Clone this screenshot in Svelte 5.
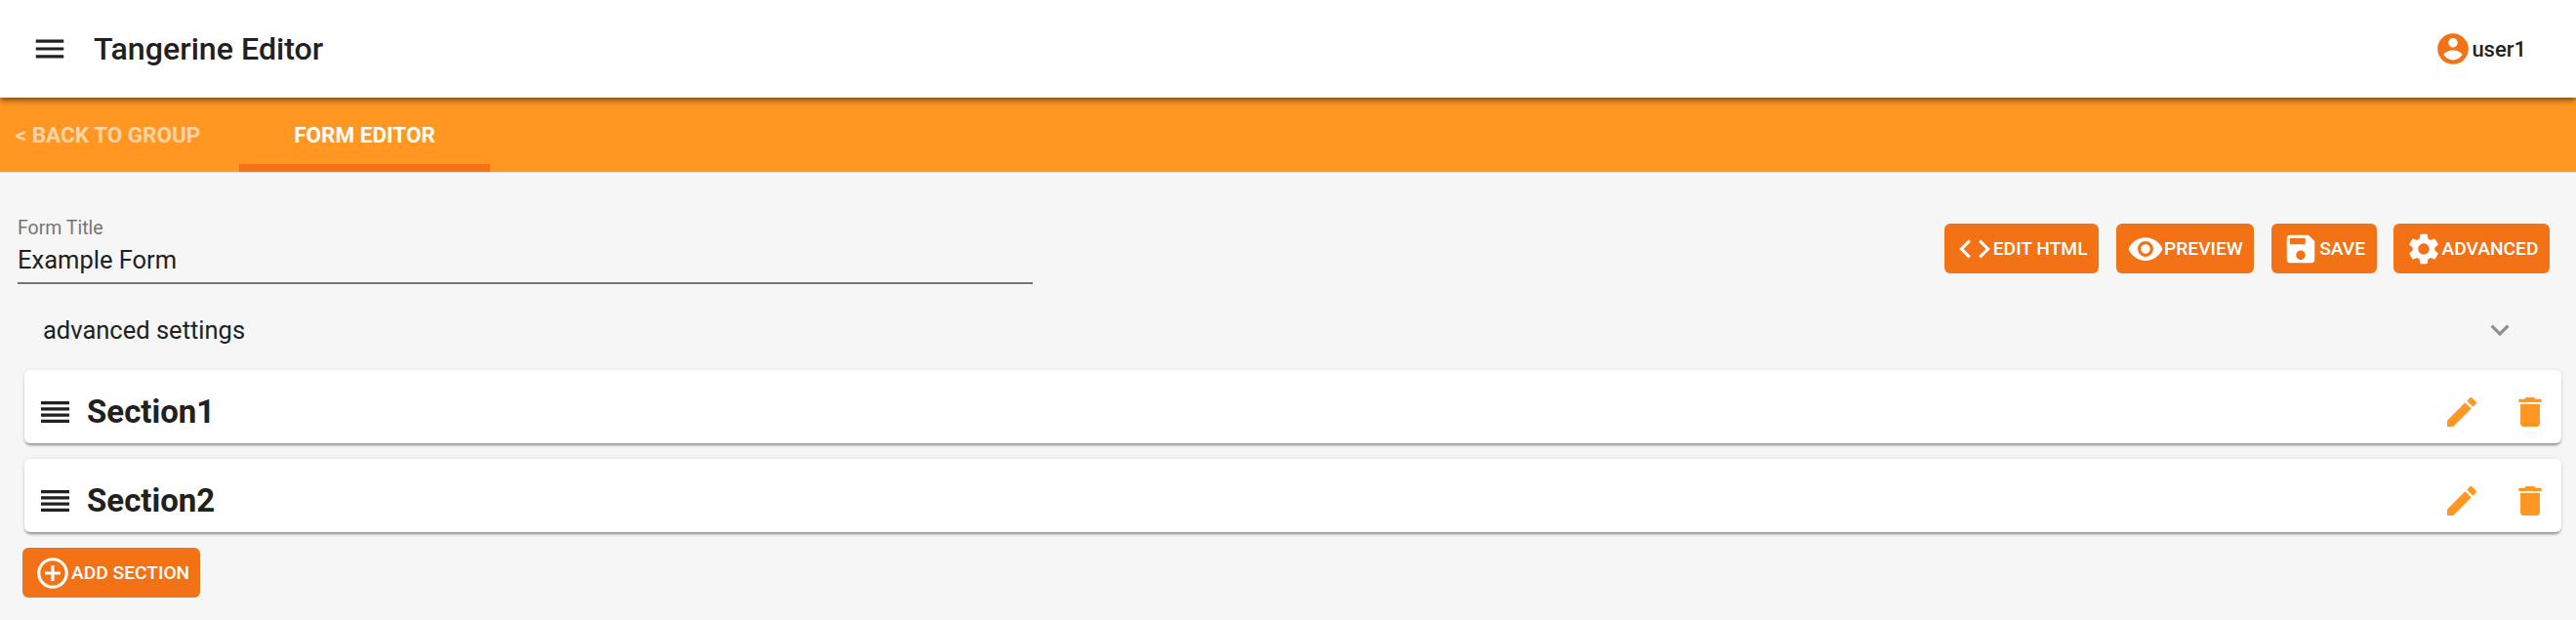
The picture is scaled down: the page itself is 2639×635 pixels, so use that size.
<script lang="ts">
	const paths = {
		menu: 'M3 18h18v-2H3v2zm0-5h18v-2H3v2zm0-7v2h18V6H3z',
		account: 'M12 2C6.48 2 2 6.48 2 12s4.48 10 10 10 10-4.48 10-10S17.52 2 12 2zm0 3c1.66 0 3 1.34 3 3s-1.34 3-3 3-3-1.34-3-3 1.34-3 3-3zm0 14.2c-2.5 0-4.71-1.28-6-3.22.03-1.99 4-3.08 6-3.08 1.99 0 5.97 1.09 6 3.08-1.29 1.94-3.5 3.22-6 3.22z',
		code: 'M9.4 16.6L4.8 12l4.6-4.6L8 6l-6 6 6 6 1.4-1.4zm5.2 0l4.6-4.6-4.6-4.6L16 6l6 6-6 6-1.4-1.4z',
		eye: 'M12 4.5C7 4.5 2.73 7.61 1 12c1.73 4.39 6 7.5 11 7.5s9.27-3.11 11-7.5c-1.73-4.39-6-7.5-11-7.5zM12 17c-2.76 0-5-2.24-5-5s2.24-5 5-5 5 2.24 5 5-2.24 5-5 5zm0-8c-1.66 0-3 1.34-3 3s1.34 3 3 3 3-1.34 3-3-1.34-3-3-3z',
		save: 'M17 3H5c-1.11 0-2 .9-2 2v14c0 1.1.89 2 2 2h14c1.1 0 2-.9 2-2V7l-4-4zm-5 16c-1.66 0-3-1.34-3-3s1.34-3 3-3 3 1.34 3 3-1.34 3-3 3zm3-10H5V5h10v4z',
		gear: 'M19.14 12.94c.04-.3.06-.61.06-.94 0-.32-.02-.64-.07-.94l2.03-1.58c.18-.14.23-.41.12-.61l-1.92-3.32c-.12-.22-.37-.29-.59-.22l-2.39.96c-.5-.38-1.03-.7-1.62-.94l-.36-2.54c-.04-.24-.24-.41-.48-.41h-3.84c-.24 0-.43.17-.47.41l-.36 2.54c-.59.24-1.13.57-1.62.94l-2.39-.96c-.22-.08-.47 0-.59.22L2.74 8.87c-.12.21-.08.47.12.61l2.03 1.58c-.05.3-.09.63-.09.94s.02.64.07.94l-2.03 1.58c-.18.14-.23.41-.12.61l1.92 3.32c.12.22.37.29.59.22l2.39-.96c.5.38 1.03.7 1.62.94l.36 2.54c.05.24.24.41.48.41h3.84c.24 0 .44-.17.47-.41l.36-2.54c.59-.24 1.13-.56 1.62-.94l2.39.96c.22.08.47 0 .59-.22l1.92-3.32c.12-.22.07-.47-.12-.61l-2.01-1.58zM12 15.6c-1.98 0-3.6-1.62-3.6-3.6s1.62-3.6 3.6-3.6 3.6 1.62 3.6 3.6-1.62 3.6-3.6 3.6z',
		add: 'M13 7h-2v4H7v2h4v4h2v-4h4v-2h-4V7zm-1-5C6.48 2 2 6.48 2 12s4.48 10 10 10 10-4.48 10-10S17.52 2 12 2zm0 18c-4.41 0-8-3.59-8-8s3.59-8 8-8 8 3.59 8 8-3.59 8-8 8z',
		edit: 'M3 17.25V21h3.75L17.81 9.94l-3.75-3.75L3 17.25zM20.71 7.04c.39-.39.39-1.02 0-1.41l-2.34-2.34c-.39-.39-1.02-.39-1.41 0l-1.83 1.83 3.75 3.75 1.83-1.83z',
		trash: 'M6 19c0 1.1.9 2 2 2h8c1.1 0 2-.9 2-2V7H6v12zM19 4h-3.5l-1-1h-5l-1 1H5v2h14V4z',
		handle: 'M4 15h16v-2H4v2zm0 4h16v-2H4v2zm0-8h16V9H4v2zm0-6v2h16V5H4z',
		chevron: 'M7.41 8.59L12 13.17l4.59-4.58L18 10l-6 6-6-6 1.41-1.41z'
	};

	const actions = [
		{ label: 'EDIT HTML', icon: paths.code },
		{ label: 'PREVIEW', icon: paths.eye },
		{ label: 'SAVE', icon: paths.save },
		{ label: 'ADVANCED', icon: paths.gear }
	];

	const sections = ['Section1', 'Section2'];
</script>

<div class="page">
	<header class="toolbar">
		<svg class="menu" viewBox="0 0 24 24"><path d={paths.menu} /></svg>
		<span class="app-title">Tangerine Editor</span>
		<span class="user">
			<svg viewBox="0 0 24 24"><path d={paths.account} /></svg>
			<span>user1</span>
		</span>
	</header>

	<nav class="tabs">
		<span class="tab back">&lt; BACK TO GROUP</span>
		<span class="tab active">FORM EDITOR</span>
	</nav>

	<main class="content">
		<div class="title-row">
			<label class="field">
				<span class="field-label">Form Title</span>
				<span class="field-value">Example Form</span>
			</label>
			<div class="actions">
				{#each actions as a}
					<button class="btn">
						<svg viewBox="0 0 24 24"><path d={a.icon} /></svg>
						{a.label}
					</button>
				{/each}
			</div>
		</div>

		<div class="expansion">
			<span>advanced settings</span>
			<svg viewBox="0 0 24 24"><path d={paths.chevron} /></svg>
		</div>

		<div class="sections">
			{#each sections as s}
				<section class="card">
					<svg class="handle" viewBox="4 5 16 14" preserveAspectRatio="none"><path d={paths.handle} /></svg>
					<h2>{s}</h2>
					<svg class="tool edit" viewBox="0 0 24 24"><path d={paths.edit} /></svg>
					<svg class="tool trash" viewBox="0 0 24 24"><path d={paths.trash} /></svg>
				</section>
			{/each}
		</div>

		<button class="btn add">
			<svg viewBox="0 0 24 24"><path d={paths.add} /></svg>
			ADD SECTION
		</button>
	</main>
</div>

<style>
	:global(body) {
		background: #f6f6f6;
	}

	.page {
		height: 635px;
		overflow: hidden;
		background: #f6f6f6;
		font-family: Roboto, sans-serif;
		color: #212121;
	}

	svg {
		display: block;
		fill: currentColor;
		flex: none;
	}

	.toolbar {
		position: relative;
		z-index: 1;
		height: 100px;
		display: flex;
		align-items: center;
		padding: 0 51px 0 32px;
		box-sizing: border-box;
		background: #fff;
		box-shadow: 0 2px 4px -1px rgba(0, 0, 0, 0.32), 0 4px 5px 0 rgba(0, 0, 0, 0.22), 0 1px 10px 0 rgba(0, 0, 0, 0.16);
	}

	.menu {
		width: 38px;
		height: 38px;
	}

	.app-title {
		margin-left: 26px;
		font-size: 32.2px;
		font-weight: 500;
	}

	.user {
		margin-left: auto;
		display: flex;
		align-items: center;
		gap: 0;
		font-size: 22px;
		font-weight: 500;
	}

	.user svg {
		width: 38px;
		height: 38px;
		color: #f47216;
	}

	.tabs {
		height: 76px;
		display: flex;
		background: #ff9722;
		font-size: 22.5px;
		font-weight: 700;
		border-bottom: 1px solid #e0e0e0;
		box-sizing: content-box;
	}

	.tab {
		display: flex;
		align-items: center;
		justify-content: center;
		box-sizing: border-box;
	}

	.back {
		width: 245px;
		padding-right: 24px;
		color: rgba(255, 255, 255, 0.6);
	}

	.active {
		width: 257px;
		color: #fff;
		border-bottom: 8px solid #f47216;
		padding-top: 8px;
	}

	.content {
		padding: 0 15px 0 18px;
	}

	.title-row {
		display: flex;
		justify-content: space-between;
		padding-top: 47px;
		padding-right: 12px;
	}

	.field {
		width: 1040px;
		display: block;
		border-bottom: 2px solid #757575;
		height: 65px;
	}

	.field-label {
		display: block;
		font-size: 19.5px;
		line-height: 20px;
		color: #757575;
	}

	.field-value {
		display: block;
		margin-top: 6px;
		font-size: 25.5px;
		line-height: 32px;
	}

	.actions {
		display: flex;
		gap: 17.5px;
		margin-top: 5px;
	}

	.btn {
		height: 51px;
		display: flex;
		align-items: center;
		gap: 0;
		padding: 0 11.5px;
		border: 0;
		border-radius: 6px;
		background: #f47216;
		color: #fff;
		font-family: inherit;
		font-size: 19.2px;
		font-weight: 500;
	}

	.btn svg {
		width: 38px;
		height: 38px;
	}

	.expansion {
		display: flex;
		justify-content: space-between;
		align-items: center;
		height: 88px;
		padding: 6px 44px 0 26px;
		box-sizing: border-box;
		font-size: 25.5px;
	}

	.expansion svg {
		width: 38px;
		height: 38px;
		color: #8f8f8f;
	}

	.sections {
		display: flex;
		flex-direction: column;
		gap: 16px;
		margin-left: 7px;
	}

	.card {
		height: 75px;
		display: flex;
		align-items: center;
		padding: 10px 12px 0 17px;
		box-sizing: border-box;
		background: #fff;
		border-radius: 6px;
		box-shadow: 0 3px 3px -1px rgba(0, 0, 0, 0.4), 0 0 5px rgba(0, 0, 0, 0.08);
	}

	.handle {
		width: 29px;
		height: 22px;
		color: #212121;
	}

	h2 {
		margin: 0 0 0 18px;
		font-size: 33px;
		font-weight: 700;
	}

	.tool {
		width: 40px;
		height: 40px;
		color: #ff9722;
	}

	.edit {
		margin-left: auto;
	}

	.trash {
		margin-left: 30px;
	}

	.add {
		margin: 16px 0 0 5px;
		padding: 0 11px 0 12px;
	}
</style>
